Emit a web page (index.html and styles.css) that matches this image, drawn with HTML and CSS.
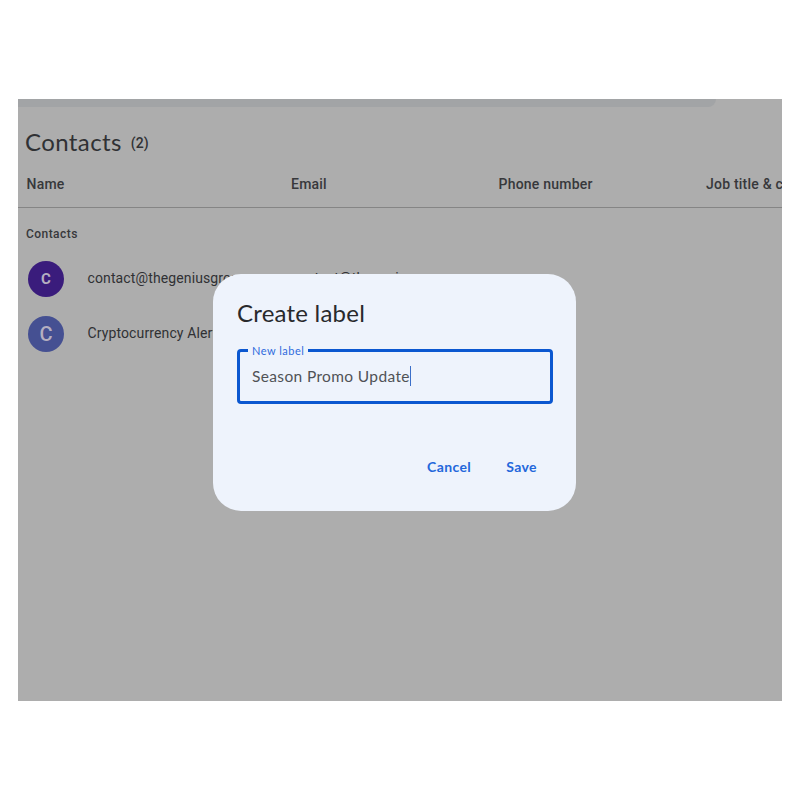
FILE: index.html
```html
<!DOCTYPE html>
<html lang="en">
<head>
<meta charset="utf-8">
<title>Contacts</title>
<link rel="stylesheet" href="styles.css">
</head>
<body>
<main class="app">
  <div class="searchbar"></div>
  <header class="heading"><h1>Contacts</h1><span class="count">(2)</span></header>
  <div class="columns"><span>Name</span><span>Email</span><span>Phone number</span><span>Job title &amp; company</span></div>
  <div class="section">Contacts</div>
  <div class="row"><span class="avatar violet">C</span><span class="name">contact@thegeniusgroup</span><span class="email">contact@thegeniusgroup</span></div>
  <div class="row"><span class="avatar indigo">C</span><span class="name">Cryptocurrency Alerts</span></div>
  <section class="dialog" role="dialog" aria-label="Create label">
    <h2>Create label</h2>
    <div class="field">
      <span class="field-label">New label</span>
      <span class="value">Season Promo Update</span><i class="caret"></i>
    </div>
    <div class="actions"><button>Cancel</button><button>Save</button></div>
  </section>
</main>
</body>
</html>
```
FILE: styles.css
```css
* { box-sizing: border-box; }
body { margin: 0; background: #fff; font-family: Roboto, sans-serif; color: #303134; }
.app { position: relative; width: 764px; height: 602px; margin: 99px 0 0 18px; background: #adadad; overflow: hidden; white-space: nowrap; }
.searchbar { width: 698px; height: 8px; background: #a2a4a6; border-radius: 0 0 9px 0; }
.heading { display: flex; align-items: center; height: 72px; padding: 0 0 1px 7px; }
h1 { margin: 0; padding-bottom: 2px; font: 400 24px/32px Lato, sans-serif; letter-spacing: .4px; }
.count { margin: 1px 0 0 9px; font-size: 14px; font-weight: 500; letter-spacing: .1px; }
.columns { display: grid; grid-template-columns: 264.5px 207.5px 207.5px 200px; height: 29px; padding-left: 8.5px; border-bottom: 1px solid #858585; font-size: 14px; font-weight: 500; line-height: 10px; letter-spacing: .22px; color: #37383b; }
.section { height: 43px; padding: 17px 0 0 8px; font-size: 12px; font-weight: 500; line-height: 18px; letter-spacing: .45px; color: #37383b; }
.row { display: grid; grid-template-columns: 59.5px 203.5px 200px; align-items: center; height: 55px; padding-left: 10px; font-size: 14px; letter-spacing: .12px; }
.name, .email { padding-bottom: 2px; }
.avatar { display: grid; place-items: center; width: 36px; height: 36px; border-radius: 50%; color: #b5afc0; letter-spacing: 0; }
.violet { background: #3a1c7c; font-size: 15px; font-weight: 700; }
.indigo { background: #455092; font-size: 20px; font-weight: 500; }
.dialog { position: absolute; left: 195px; top: 175px; width: 363px; height: 237px; padding: 24px; border-radius: 28px; background: #eef3fc; }
h2 { margin: 0; font: 400 24px/30px Lato, sans-serif; letter-spacing: .22px; color: #28292c; }
.field { position: relative; display: flex; align-items: center; width: 316px; height: 55px; margin: 21px 0 0 -.5px; padding: 0 0 1px 12.5px; border: 3px solid #0b57d0; border-radius: 4px; }
.field-label { position: absolute; left: 8.5px; top: -8px; padding: 0 4px; background: #eef3fc; color: #2f6bdc; font: 11px/13px Lato, sans-serif; letter-spacing: .5px; }
.value { font: 15.5px/20px Lato, sans-serif; letter-spacing: .36px; color: #505256; }
.caret { width: 1px; height: 20px; background: #3b6fc9; }
.actions { display: flex; justify-content: flex-end; gap: 35px; margin-top: 53px; padding-right: 15px; }
button { padding: 0; border: 0; background: none; color: #2467db; font: 700 14px/20px Lato, sans-serif; letter-spacing: .4px; }
```
